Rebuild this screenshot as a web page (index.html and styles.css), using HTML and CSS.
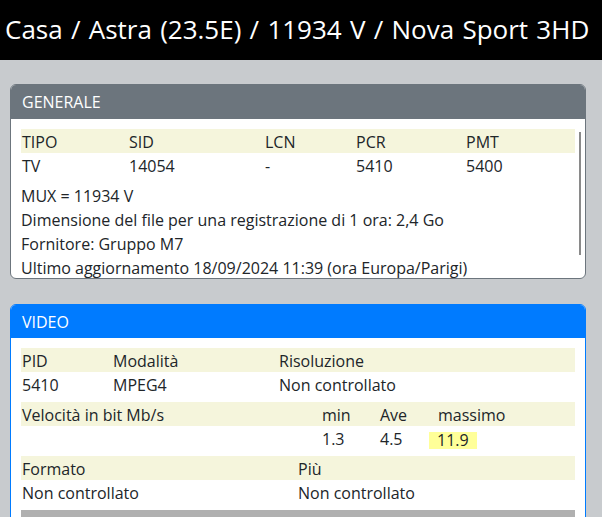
FILE: index.html
```html
<!DOCTYPE html>
<html lang="it">
<head>
  <meta charset="UTF-8" />
  <meta name="viewport" content="width=device-width, initial-scale=1.0" />
  <title>Nova Sport 3HD</title>
  <link rel="stylesheet" href="styles.css">
</head>
<body>

  <div class="topbar">Casa / Astra (23.5E) / 11934 V / Nova Sport 3HD</div>

  <div class="main">
    <!-- Generale -->
    <div class="card card-gray">
      <div class="card-header">GENERALE</div>
      <div class="card-body scroll">
        <table class="info">
          <tr class="head">
            <td class="w107">TIPO</td>
            <td class="w136">SID</td>
            <td class="w91">LCN</td>
            <td class="w110">PCR</td>
            <td>PMT</td>
          </tr>
          <tr>
            <td>TV</td>
            <td>14054</td>
            <td>-</td>
            <td>5410</td>
            <td>5400</td>
          </tr>
        </table>
        <div class="line">MUX = 11934 V</div>
        <div class="line">Dimensione del file per una registrazione di 1 ora: 2,4 Go</div>
        <div class="line">Fornitore: Gruppo M7</div>
        <div class="line">Ultimo aggiornamento 18/09/2024 11:39 (ora Europa/Parigi)</div>
      </div>
    </div>

    <!-- Video -->
    <div class="card card-blue">
      <div class="card-header">VIDEO</div>
      <div class="card-body">
        <table class="info">
          <tr class="head">
            <td class="w91">PID</td>
            <td class="w166">Modalità</td>
            <td>Risoluzione</td>
          </tr>
          <tr>
            <td>5410</td>
            <td>MPEG4</td>
            <td>Non controllato</td>
          </tr>
        </table>
        <table class="info">
          <tr class="head">
            <td class="w300">Velocità in bit Mb/s</td>
            <td class="w58">min</td>
            <td class="w58">Ave</td>
            <td>massimo</td>
          </tr>
          <tr>
            <td></td>
            <td>1.3</td>
            <td>4.5</td>
            <td><span class="max">11.9</span></td>
          </tr>
        </table>
        <table class="info">
          <tr class="head">
            <td class="w276">Formato</td>
            <td>Più</td>
          </tr>
          <tr>
            <td>Non controllato</td>
            <td>Non controllato</td>
          </tr>
        </table>
        <div class="bar"></div>
      </div>
    </div>
  </div>

</body>
</html>
```

FILE: styles.css
```css
body {
  font-family: 'Open Sans', 'Noto Sans', sans-serif;
  font-size: 16px;
  color: #212529;
  background-color: #c8cbce;
  margin: 0;
}

.topbar {
  background-color: #000;
  color: #fff;
  height: 60px;
  line-height: 58px;
  padding-left: 5px;
  font-size: 26px;
  word-spacing: 1.5px;
  white-space: nowrap;
}

.main {
  padding: 24px 16px 0 10px;
}

.card {
  background-color: #fff;
  border: 1px solid;
  border-radius: 6px;
  overflow: hidden;
  margin-bottom: 25px;
}

.card-gray {
  border-color: #6c757d;
}

.card-blue {
  border-color: #007bff;
}

.card-header {
  color: #fff;
  padding: 6px 11px;
  line-height: 22px;
}

.card-gray .card-header {
  background-color: #6c757d;
}

.card-blue .card-header {
  background-color: #007bff;
  padding-bottom: 5px;
}

.card-body {
  padding: 10px;
  line-height: 22px;
}

.scroll {
  position: relative;
  height: 139px;
  overflow: hidden;
  padding-right: 10px;
}

/* fake thin scrollbar */
.scroll::after {
  content: '';
  position: absolute;
  right: 4px;
  top: 13px;
  height: 123px;
  width: 2px;
  background-color: #8a8a8a;
}

table.info {
  width: 100%;
  border-collapse: collapse;
  margin-bottom: 6px;
}

table.info td {
  padding: 2px 1px 0;
  height: 22px;
  white-space: nowrap;
}

tr.head td {
  background-color: #f5f5dc;
}

.w58 { width: 56px; }
.w91 { width: 89px; }
.w107 { width: 105px; }
.w110 { width: 108px; }
.w136 { width: 134px; }
.w166 { width: 164px; }
.w276 { width: 274px; }
.w300 { width: 298px; }

.line {
  height: 22px;
  padding-top: 2px;
}

.max {
  display: inline-block;
  background-color: #ffff99;
  padding: 0 8px;
  margin-left: -9px;
  line-height: 17px;
  vertical-align: middle;
}

.bar {
  height: 30px;
  background-color: #b0b0b0;
}
```
